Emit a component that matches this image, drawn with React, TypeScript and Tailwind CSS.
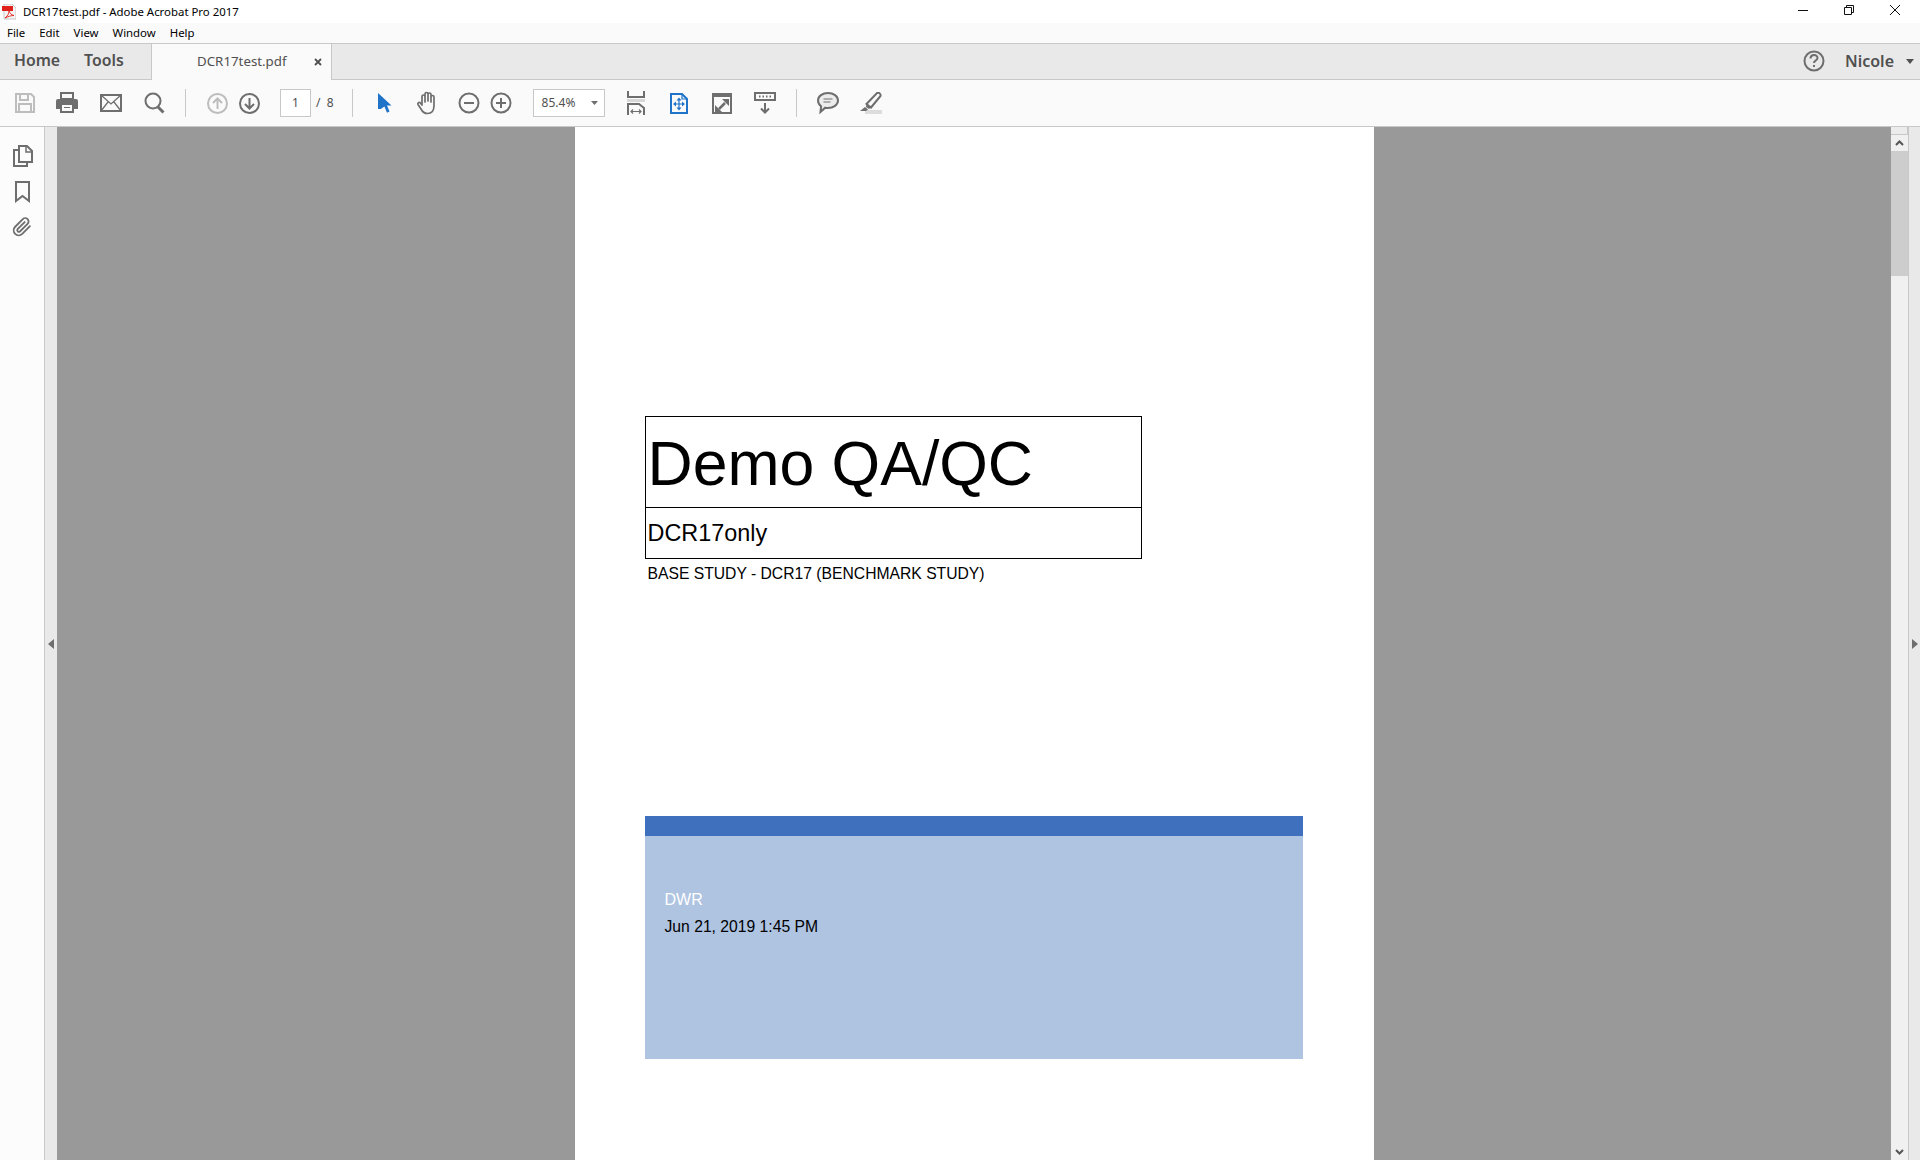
const ui = { fontFamily: '"Noto Sans", "Open Sans", sans-serif' };

function Separator({ className }: { className: string }) {
  return <div className={`h-[28px] w-px bg-[#c8c8c8] ${className}`} />;
}

function SaveIcon() {
  return (
    <svg width="22" height="22" viewBox="0 0 22 22" fill="none" stroke="#bdbdbd" strokeWidth="2">
      <path d="M2 2h15l3 3v15H2z" />
      <path d="M6 2v6h8V2M5 20v-8h12v8" />
    </svg>
  );
}

function PrintIcon() {
  return (
    <svg width="22" height="22" viewBox="0 0 22 22">
      <path d="M5 1h12v6H5z" fill="none" stroke="#6e6e6e" strokeWidth="2" />
      <path d="M2 7h18a2 2 0 0 1 2 2v8h-4v4H4v-4H0V9a2 2 0 0 1 2-2z" fill="#6e6e6e" />
      <path d="M6 13h10v6H6z" fill="#fafafa" />
      <path d="M8 15h6v1H8z" fill="#6e6e6e" />
    </svg>
  );
}

function MailIcon() {
  return (
    <svg width="22" height="18" viewBox="0 0 22 18" fill="none" stroke="#6e6e6e" strokeWidth="2">
      <rect x="1" y="1" width="20" height="16" />
      <path d="M1 1l10 9 10-9M1 17l7-9M21 17l-7-9" strokeWidth="1.3" />
    </svg>
  );
}

function SearchIcon() {
  return (
    <svg width="21" height="22" viewBox="0 0 21 22" fill="none" stroke="#6e6e6e">
      <circle cx="9" cy="9" r="7.5" strokeWidth="2" />
      <path d="M14 15l5.5 5.5" strokeWidth="3" />
    </svg>
  );
}

function ArrowCircle({ color, up }: { color: string; up?: boolean }) {
  return (
    <svg width="21" height="21" viewBox="0 0 21 21" fill="none" stroke={color} strokeWidth="2">
      <circle cx="10.5" cy="10.5" r="9.5" />
      <path d={up ? 'M10.5 16V6M6 10l4.5-4.5L15 10' : 'M10.5 5v10M6 11l4.5 4.5L15 11'} />
    </svg>
  );
}

function CursorIcon() {
  return (
    <svg width="14" height="20" viewBox="0 0 14 20">
      <path d="M0 0l13.5 12.5H9l2.5 6-2.5 1.3-2.6-6.3L2.8 16H0z" fill="#1f73c9" />
    </svg>
  );
}

function HandIcon() {
  return (
    <svg width="23" height="24" viewBox="0 0 23 24" fill="none" stroke="#6e6e6e" strokeWidth="1.7" strokeLinecap="round" strokeLinejoin="round">
      <path d="M6 14V5.5a1.5 1.5 0 0 1 3 0V11M9 10V3a1.5 1.5 0 0 1 3 0v7M12 10V3.5a1.5 1.5 0 0 1 3 0V11M15 11V6a1.5 1.5 0 0 1 3 0v8.5c0 5-2.5 8-6.5 8-3.5 0-5-1.500-6.500-4.500L2 13.500c-.8-1.500 1.200-2.800 2.400-1.500L6 14" />
    </svg>
  );
}

function ZoomCircle({ plus }: { plus?: boolean }) {
  return (
    <svg width="22" height="22" viewBox="0 0 22 22" fill="none" stroke="#6e6e6e" strokeWidth="2">
      <circle cx="11" cy="11" r="9.5" />
      <path d={plus ? 'M6 11h10M11 6v10' : 'M6 11h10'} />
    </svg>
  );
}

function FitWidthIcon() {
  return (
    <svg width="18" height="24" viewBox="0 0 18 24" fill="none" stroke="#6e6e6e" strokeWidth="2">
      <path d="M1 0v6h16V0" />
      <path d="M0 9.500h18" stroke="#d8d8d8" strokeWidth="3" />
      <path d="M1 24V13h11l5 4v7" />
      <path d="M4 20.500h10M6 18.500l-2 2 2 2M12 18.500l2 2-2 2" strokeWidth="1.200" />
    </svg>
  );
}

function FitPageIcon() {
  return (
    <svg width="18" height="21" viewBox="0 0 18 21" fill="none" stroke="#1f73c9">
      <path d="M1 1h11l5 5v14H1z" strokeWidth="2" />
      <path d="M12 1v5h5" strokeWidth="1.200" />
      <path d="M9 7v8M5 11h8" strokeWidth="1.200" />
      <path d="M9 4.500L6.500 7.500h5zM9 17.500L6.500 14.500h5zM3 11l3-2.500v5zM15 11l-3-2.500v5z" fill="#1f73c9" stroke="none" />
    </svg>
  );
}

function FullScreenIcon() {
  return (
    <svg width="20" height="21" viewBox="0 0 20 21">
      <path d="M0 0h20v21H0zM2 4v15h16V4z" fill="#6e6e6e" fillRule="evenodd" />
      <path d="M10 6h7v7zM3 19v-7l7 7z" fill="#6e6e6e" />
      <path d="M13 10l-6 6" stroke="#6e6e6e" strokeWidth="2.500" />
    </svg>
  );
}

function ScrollModeIcon() {
  return (
    <svg width="22" height="22" viewBox="0 0 22 22" fill="none" stroke="#6e6e6e" strokeWidth="2">
      <rect x="1" y="1" width="20" height="7" />
      <path d="M5 4.500h1.500M8.500 4.500H10M12 4.500h1.500M15.500 4.500H17" strokeWidth="2" />
      <path d="M11 11v9M7 16.500l4 4 4-4" />
    </svg>
  );
}

function CommentIcon() {
  return (
    <svg width="22" height="22" viewBox="0 0 22 22" fill="none" stroke="#6e6e6e" strokeWidth="2">
      <path d="M11 1c5.500 0 10 3.300 10 7.500S16.500 16 11 16c-1 0-2-.1-2.800-.3L3.500 20l.6-5.800C2.200 12.800 1 10.800 1 8.500 1 4.300 5.500 1 11 1z" fill="#ececec" />
      <path d="M6.500 7h9M6.500 10h7" strokeWidth="1.200" />
    </svg>
  );
}

function SignIcon() {
  return (
    <svg width="22" height="23" viewBox="0 0 22 23">
      <path d="M5 18h17v4H5z" fill="#dcdcdc" />
      <path d="M17 1c2-1 4 1 3.500 3L11 15.500 6.500 12z" fill="none" stroke="#6e6e6e" strokeWidth="2" />
      <path d="M6.500 12l4.500 3.500-2 1.500-3-2zM5 15l3 2.500-2 1.500H0z" fill="#6e6e6e" />
    </svg>
  );
}

function PagesIcon() {
  return (
    <svg width="20" height="22" viewBox="0 0 20 22" fill="none" stroke="#6e6e6e" strokeWidth="2">
      <path d="M6 1h8l5 5v11H6z" />
      <path d="M13 1v6h6" strokeWidth="1.500" />
      <path d="M6 5H1v16h13v-4" />
    </svg>
  );
}

function BookmarkIcon() {
  return (
    <svg width="15" height="22" viewBox="0 0 15 22" fill="none" stroke="#6e6e6e" strokeWidth="2">
      <path d="M1 1h13v19l-6.500-5L1 20z" />
    </svg>
  );
}

function PaperclipIcon() {
  return (
    <svg width="20" height="20" viewBox="0 0 24 24" fill="none" stroke="#6e6e6e" strokeWidth="2.200" strokeLinecap="round">
      <path d="M21.500 11l-9.200 9.200a6 6 0 0 1-8.500-8.500l9.200-9.200a4 4 0 0 1 5.700 5.700l-9.200 9.200a2 2 0 0 1-2.800-2.800l8.500-8.500" />
    </svg>
  );
}

function PdfFileIcon() {
  return (
    <svg width="14" height="16" viewBox="0 0 14 16">
      <path d="M2 0h8l4 4v11H2z" fill="#f4f4f4" stroke="#c8c8c8" />
      <path d="M0 2h11v5H0z" fill="#e0201b" />
      <path d="M3 14c3-2 4-5 4-8 .5 3 2 5 5 5.500-3 0-6 1-9 2.500z" fill="none" stroke="#e0201b" strokeWidth="0.900" />
    </svg>
  );
}

function TitleBar() {
  return (
    <div className="flex h-[23px] items-center bg-white text-[11.4px] text-black">
      <div className="ml-[2px] flex w-[21px]">
        <PdfFileIcon />
      </div>
      <span>DCR17test.pdf - Adobe Acrobat Pro 2017</span>
      <div className="mb-[3px] ml-auto mr-[19px] flex items-center gap-[34px]">
        <svg width="12" height="10" viewBox="0 0 12 10" stroke="#111" fill="none">
          <path d="M1 5.500h10" />
        </svg>
        <svg width="12" height="12" viewBox="0 0 12 12" stroke="#111" fill="none">
          <path d="M1.500 3.500h7v7h-7zM3.500 3.500v-2h7v7h-2" />
        </svg>
        <svg width="12" height="12" viewBox="0 0 12 12" stroke="#111" fill="none">
          <path d="M1 1l10 10M11 1L1 11" />
        </svg>
      </div>
    </div>
  );
}

function MenuBar() {
  return (
    <div className="flex h-[20px] items-center gap-[14px] bg-[#fafafa] pl-[7px] text-[11.4px] leading-none text-black">
      <span>File</span>
      <span>Edit</span>
      <span>View</span>
      <span>Window</span>
      <span>Help</span>
    </div>
  );
}

function TabBar() {
  return (
    <div className="flex h-[37px] border-y border-[#c8c8c8] bg-[#e9e9e9] text-[#505050]">
      <div className="flex w-[151px] items-center gap-[24px] pb-px pl-[14px] text-[15.8px] font-semibold">
        <span>Home</span>
        <span>Tools</span>
      </div>
      <div className="-mb-px flex w-[181px] items-center border-x border-[#c8c8c8] bg-[#fafafa] pl-[45px] text-[13.3px]">
        <span>DCR17test.pdf</span>
        <svg className="ml-[27px]" width="8" height="8" viewBox="0 0 8 8" stroke="#505050" strokeWidth="1.800">
          <path d="M1 1l6 6M7 1L1 7" />
        </svg>
      </div>
      <div className="ml-auto flex items-center pb-px">
        <svg width="22" height="22" viewBox="0 0 22 22" fill="none" stroke="#6e6e6e" strokeWidth="2">
          <circle cx="11" cy="11" r="9.500" />
          <path d="M7.500 8.500c0-4.500 7-4.500 7-.5 0 2.500-3.500 2.500-3.500 5" />
          <path d="M11 15v2" />
        </svg>
        <span className="ml-[20px] text-[16px] font-semibold">Nicole</span>
        <svg className="ml-[12px] mr-[6px]" width="8" height="5" viewBox="0 0 8 5">
          <path d="M0 0h8L4 5z" fill="#505050" />
        </svg>
      </div>
    </div>
  );
}

function Toolbar() {
  return (
    <div className="flex h-[47px] items-center border-b border-[#c8c8c8] bg-[#fafafa] pl-[14px]">
      <SaveIcon />
      <div className="ml-[20px]"><PrintIcon /></div>
      <div className="ml-[22px]"><MailIcon /></div>
      <div className="ml-[22px]"><SearchIcon /></div>
      <Separator className="ml-[20px]" />
      <div className="ml-[21px]"><ArrowCircle color="#bdbdbd" up /></div>
      <div className="ml-[11px]"><ArrowCircle color="#6e6e6e" /></div>
      <div className="ml-[20px] flex h-[28px] w-[31px] items-center justify-center border border-[#c8c8c8] bg-white text-[12px] text-[#505050]">1</div>
      <span className="ml-[5px] whitespace-pre text-[12px] text-[#505050]">/  8</span>
      <Separator className="ml-[18px]" />
      <div className="ml-[25px]"><CursorIcon /></div>
      <div className="ml-[24px]"><HandIcon /></div>
      <div className="ml-[19px]"><ZoomCircle /></div>
      <div className="ml-[10px]"><ZoomCircle plus /></div>
      <div className="ml-[21px] flex h-[28px] w-[72px] items-center justify-between border border-[#c8c8c8] bg-white pl-[8px] pr-[6px] text-[12px] text-[#505050]">
        <span>85.4%</span>
        <svg width="7" height="4" viewBox="0 0 7 4"><path d="M0 0h7L3.500 4z" fill="#6e6e6e" /></svg>
      </div>
      <div className="ml-[22px]"><FitWidthIcon /></div>
      <div className="ml-[25px]"><FitPageIcon /></div>
      <div className="ml-[24px]"><FullScreenIcon /></div>
      <div className="ml-[22px]"><ScrollModeIcon /></div>
      <Separator className="ml-[20px]" />
      <div className="ml-[20px]"><CommentIcon /></div>
      <div className="ml-[21px]"><SignIcon /></div>
    </div>
  );
}

function Sidebar() {
  return (
    <div className="flex w-[45px] flex-col items-center gap-[14px] border-r border-[#c8c8c8] bg-[#fcfcfc] pt-[18px]">
      <div className="ml-[2px]"><PagesIcon /></div>
      <BookmarkIcon />
      <PaperclipIcon />
    </div>
  );
}

function CollapseStrip({ flip }: { flip?: boolean }) {
  return (
    <svg width="6" height="10" viewBox="0 0 6 10" className={flip ? 'rotate-180' : ''}>
      <path d="M6 0v10L0 5z" fill="#6e6e6e" />
    </svg>
  );
}

function PdfPage() {
  return (
    <div className="w-[799px] bg-white pl-[70px] pt-[289px]" style={{ fontFamily: '"Liberation Sans", Arial, sans-serif' }}>
      <div className="w-[497px] border-[1.5px] border-black text-black">
        <div className="flex h-[91px] items-center border-b-[1.5px] border-black pl-[2px] pt-[3px] text-[62.5px] leading-none">Demo QA/QC</div>
        <div className="flex h-[50px] items-center pl-[2px] pt-[2px] text-[23.4px] leading-none">DCR17only</div>
      </div>
      <div className="mt-[6px] pl-[3px] text-[15.7px] leading-[18px] text-black">BASE STUDY - DCR17 (BENCHMARK STUDY)</div>
      <div className="mt-[233px] h-[243px] w-[658px] bg-[#afc4e1]">
        <div className="h-[20px] bg-[#3f70bd]" />
        <div className="pl-[20px] pt-[55px] text-[15.7px] leading-[18px]">
          <div className="text-[16px] text-white">DWR</div>
          <div className="mt-[9px] text-black">Jun 21, 2019 1:45 PM</div>
        </div>
      </div>
    </div>
  );
}

function Scrollbar() {
  return (
    <div className="flex w-[18px] flex-col items-center border-r border-[#c8c8c8] bg-[#f0f0f0]">
      <div className="h-[8px] w-full border-b border-r border-[#c8c8c8] bg-[#ececec]" />
      <div className="flex h-[16px] items-center">
        <svg width="9" height="6" viewBox="0 0 9 6" fill="none" stroke="#555" strokeWidth="2"><path d="M1 5l3.500-3.500L8 5" /></svg>
      </div>
      <div className="h-[125px] w-full bg-[#cdcdcd]" />
      <div className="mt-auto flex h-[16px] items-center">
        <svg width="9" height="6" viewBox="0 0 9 6" fill="none" stroke="#555" strokeWidth="2"><path d="M1 1l3.500 3.500L8 1" /></svg>
      </div>
    </div>
  );
}

export default function App() {
  return (
    <div className="flex h-[1160px] w-[1920px] flex-col overflow-hidden bg-white" style={ui}>
      <TitleBar />
      <MenuBar />
      <TabBar />
      <Toolbar />
      <div className="flex min-h-0 flex-1">
        <Sidebar />
        <div className="flex w-[12px] items-center justify-center bg-[#e9e9e9]">
          <CollapseStrip />
        </div>
        <div className="flex flex-1 justify-center overflow-hidden bg-[#999999]">
          <PdfPage />
        </div>
        <Scrollbar />
        <div className="flex w-[11px] items-center justify-center bg-[#e9e9e9]">
          <CollapseStrip flip />
        </div>
      </div>
    </div>
  );
}
